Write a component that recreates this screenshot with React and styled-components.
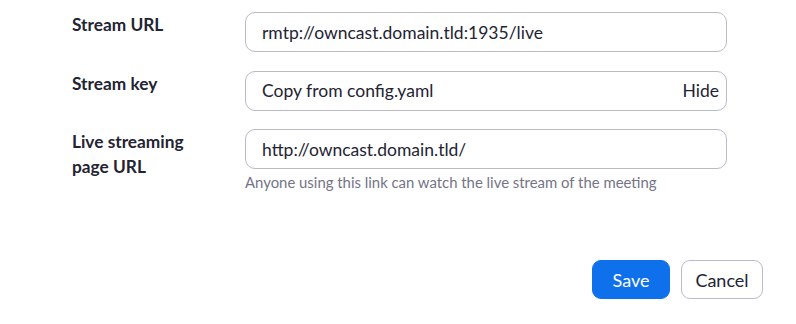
import React from 'react';
import styled, { createGlobalStyle } from 'styled-components';

const colors = {
  text: '#232333',
  hint: '#747487',
  border: '#babacc',
  blue: '#0e71eb',
  white: '#ffffff'
};

const GlobalStyle = createGlobalStyle`
  html, body {
    margin: 0;
    padding: 0;
    background: ${colors.white};
  }
  body {
    font-family: Lato, "Noto Sans", sans-serif;
    color: ${colors.text};
  }
`;

const Page = styled.div`
  width: 796px;
  height: 324px;
  box-sizing: border-box;
  padding: 12px 0 0 72px;
  display: flex;
  flex-direction: column;
`;

const Form = styled.div`
  display: grid;
  grid-template-columns: 173px 482px;
  row-gap: 18.5px;
`;

const Label = styled.div`
  font-size: 17.3px;
  font-weight: 700;
  line-height: 25px;
`;

const Field = styled.div`
  display: flex;
  flex-direction: column;
`;

const InputBox = styled.div`
  display: flex;
  align-items: center;
  height: 40px;
  box-sizing: border-box;
  border: 1px solid ${colors.border};
  border-radius: 10px;
  padding: 0 7px 0 16px;
  font-size: 17.5px;
`;

const Value = styled.span`
  flex-grow: 1;
`;

const Toggle = styled.span`
  color: ${colors.text};
`;

const Hint = styled.div`
  font-size: 14.9px;
  color: ${colors.hint};
  margin-top: 4px;
`;

const Actions = styled.div`
  display: flex;
  justify-content: flex-end;
  gap: 11px;
  margin-top: 69px;
  padding-right: 33px;
`;

const Button = styled.button`
  height: 39px;
  box-sizing: border-box;
  border-radius: 9px;
  font-family: Lato, "Noto Sans", sans-serif;
  font-size: 18px;
  padding: 0;
  width: ${props => props.w}px;
  background: ${props => (props.primary ? colors.blue : colors.white)};
  color: ${props => (props.primary ? colors.white : colors.text)};
  border: 1px solid ${props => (props.primary ? colors.blue : colors.border)};
`;

const rows = [
  { label: 'Stream URL', value: 'rmtp://owncast.domain.tld:1935/live' },
  { label: 'Stream key', value: 'Copy from config.yaml', toggle: 'Hide' },
  {
    label: ['Live streaming', 'page URL'],
    value: 'http://owncast.domain.tld/',
    hint: 'Anyone using this link can watch the live stream of the meeting'
  }
];

export default function App() {
  return (
    <>
      <GlobalStyle />
      <Page>
        <Form>
          {rows.map((row, i) => (
            <React.Fragment key={i}>
              <Label>
                {Array.isArray(row.label)
                  ? row.label.map((line, j) => <div key={j}>{line}</div>)
                  : row.label}
              </Label>
              <Field>
                <InputBox>
                  <Value>{row.value}</Value>
                  {row.toggle && <Toggle>{row.toggle}</Toggle>}
                </InputBox>
                {row.hint && <Hint>{row.hint}</Hint>}
              </Field>
            </React.Fragment>
          ))}
        </Form>
        <Actions>
          <Button primary w={78}>Save</Button>
          <Button w={82}>Cancel</Button>
        </Actions>
      </Page>
    </>
  );
}
